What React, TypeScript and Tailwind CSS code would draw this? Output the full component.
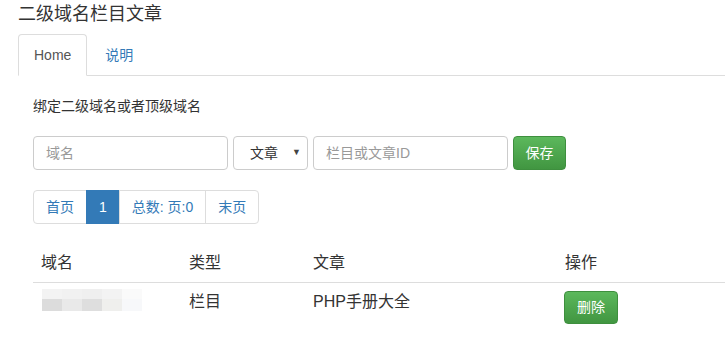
import React from "react";

const font = "font-['Liberation_Sans','Noto_Sans_CJK_SC',sans-serif]";

export default function App() {
  return (
    <div className={`${font} bg-white w-[725px] h-[357px] overflow-hidden text-[14px] text-[#333]`}>
      <div className="px-[18px]">
        {/* 标题 */}
        <h1 className="text-[18px] leading-[28px] font-normal">二级域名栏目文章</h1>

        {/* Tabs */}
        <ul className="mt-[6px] flex border-b border-[#ddd] -mr-[18px]">
          <li className="-mb-px mr-[2px]">
            <a className="block px-[15px] py-[10px] leading-[20px] border border-[#ddd] border-b-transparent rounded-t-[4px] bg-white text-[#555]">
              Home
            </a>
          </li>
          <li className="-mb-px">
            <a className="block px-[15px] py-[10px] leading-[20px] border border-transparent text-[#337ab7]">
              说明
            </a>
          </li>
        </ul>

        <div className="pl-[15px]">
          <p className="pt-[20px] leading-[20px]">绑定二级域名或者顶级域名</p>

          {/* 表单 */}
          <div className="mt-[20px] flex gap-[5px]">
            <div className="w-[195px] h-[34px] border border-[#ccc] rounded-[4px] px-[12px] flex items-center text-[#999]">
              域名
            </div>
            <div className="w-[75px] h-[34px] border border-[#ccc] rounded-[4px] pl-[16px] pr-[6px] flex items-center justify-between text-[#333]">
              <span>文章</span>
              <span className="text-[9px] text-[#444]">▼</span>
            </div>
            <div className="w-[195px] h-[34px] border border-[#ccc] rounded-[4px] px-[12px] flex items-center text-[#999]">
              栏目或文章ID
            </div>
            <button className="w-[53px] h-[34px] rounded-[4px] border border-[#3e8f3e] bg-gradient-to-b from-[#5cb85c] to-[#419641] text-white">
              保存
            </button>
          </div>

          {/* 分页 */}
          <div className="mt-[20px] flex h-[34px]">
            <span className="flex items-center px-[12px] border border-[#ddd] rounded-l-[4px] text-[#337ab7]">首页</span>
            <span className="flex items-center px-[12px] border border-[#337ab7] bg-[#337ab7] -ml-px text-white">1</span>
            <span className="flex items-center px-[12px] border border-[#ddd] -ml-px text-[#337ab7]">总数: 页:0</span>
            <span className="flex items-center px-[12px] border border-[#ddd] -ml-px rounded-r-[4px] text-[#337ab7]">末页</span>
          </div>

          {/* 表格 */}
          <div className="mt-[20px] w-[720px] text-[16px]">
            <div className="grid grid-cols-[148px_124px_252px_196px] border-b border-[#ddd]">
              <div className="p-[8px] leading-[22px]">域名</div>
              <div className="p-[8px] leading-[22px]">类型</div>
              <div className="p-[8px] leading-[22px]">文章</div>
              <div className="p-[8px] leading-[22px]">操作</div>
            </div>
            <div className="grid grid-cols-[148px_124px_252px_196px]">
              <div className="pt-[6px] pl-[7px]">
                <div className="blur-[0.6px]">
                  <div className="flex ml-[2px]">
                    <div className="w-[20px] h-[10px] bg-[#f3f3f3]" />
                    <div className="w-[20px] h-[10px] bg-[#f1f1f1]" />
                    <div className="w-[20px] h-[10px] bg-[#efefef]" />
                    <div className="w-[20px] h-[10px] bg-[#f3f3f3]" />
                    <div className="w-[20px] h-[10px] bg-[#fafafa]" />
                  </div>
                  <div className="flex ml-[2px]">
                    <div className="w-[20px] h-[12px] bg-[#dcdcdc]" />
                    <div className="w-[20px] h-[12px] bg-[#e9e9e9]" />
                    <div className="w-[20px] h-[12px] bg-[#dedede]" />
                    <div className="w-[20px] h-[12px] bg-[#efefed]" />
                    <div className="w-[20px] h-[12px] bg-[#f7f8fa]" />
                  </div>
                </div>
              </div>
              <div className="p-[8px] leading-[22px]">栏目</div>
              <div className="p-[8px] leading-[22px]">PHP手册大全</div>
              <div className="py-[8px] pl-[7px]">
                <button className="w-[54px] h-[33px] rounded-[4px] border border-[#3e8f3e] bg-gradient-to-b from-[#5cb85c] to-[#419641] text-white text-[14px]">
                  删除
                </button>
              </div>
            </div>
          </div>
        </div>
      </div>
    </div>
  );
}
